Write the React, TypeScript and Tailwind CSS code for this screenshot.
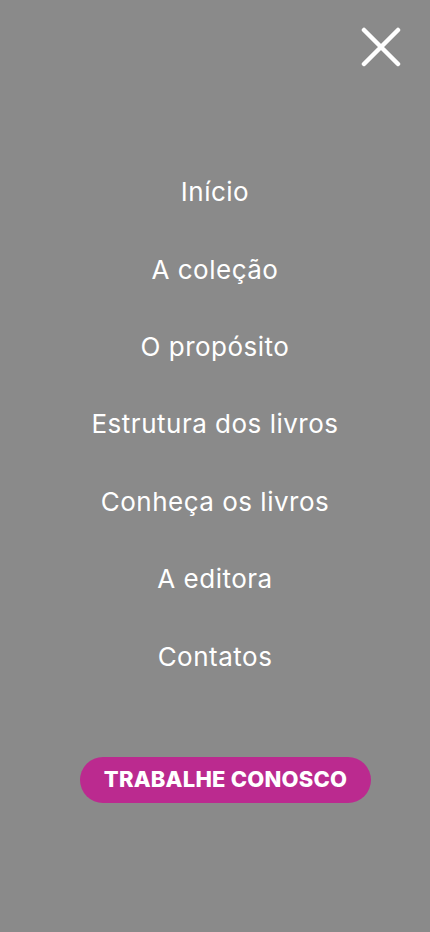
import React from "react";

const items = [
  "Início",
  "A coleção",
  "O propósito",
  "Estrutura dos livros",
  "Conheça os livros",
  "A editora",
  "Contatos",
];

export default function App() {
  return (
    <div
      className="w-[430px] h-[932px] bg-[#8a8a8a] flex flex-col overflow-hidden"
      style={{ fontFamily: "Inter, 'Noto Sans', sans-serif" }}
    >
      <div className="flex justify-end pt-[27px] pr-[29px] h-[70px]">
        <button aria-label="Fechar" className="w-[40px] h-[40px] flex items-center justify-center">
          <svg width="40" height="40" viewBox="0 0 40 40" fill="none">
            <path d="M3 3 L37 37 M37 3 L3 37" stroke="white" strokeWidth="4.5" strokeLinecap="round" />
          </svg>
        </button>
      </div>
      <nav className="flex flex-col items-center pt-[83px]">
        {items.map((t) => (
          <a
            key={t}
            className="h-[77.4px] flex items-center justify-center text-white text-[26px] font-normal tracking-[0.5px]"
          >
            {t}
          </a>
        ))}
      </nav>
      <div className="flex justify-center pt-[62px] pl-[21px]">
        <button className="w-[291px] h-[46px] rounded-full bg-[#bb2a8f] text-white text-[22px] font-extrabold tracking-[0.2px] flex items-center justify-center">
          TRABALHE CONOSCO
        </button>
      </div>
    </div>
  );
}
